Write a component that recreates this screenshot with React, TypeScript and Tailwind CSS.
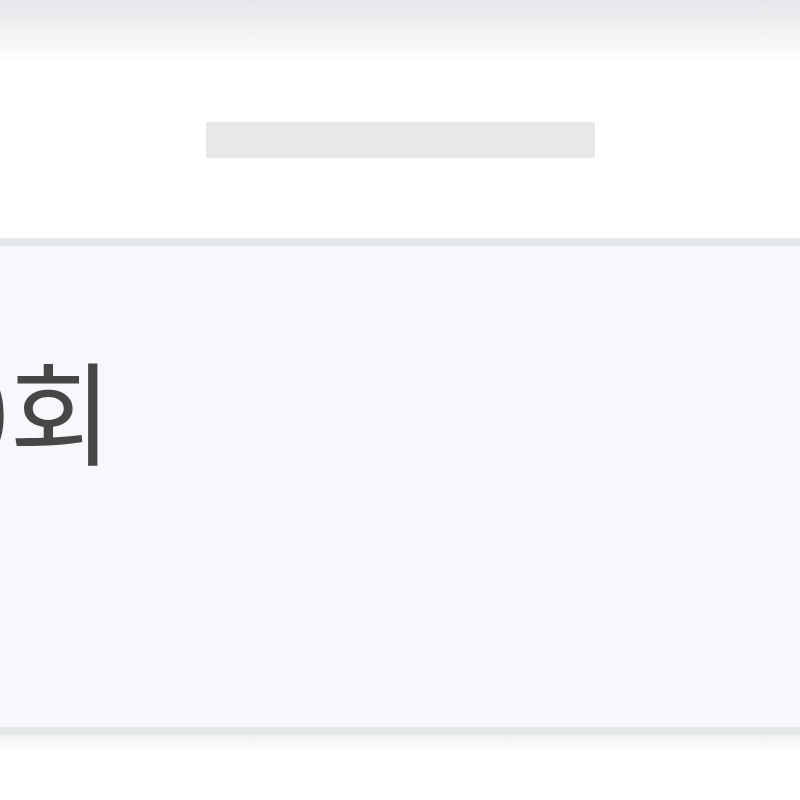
import React from 'react';

// Zoomed-in crop of a stats sheet: header with a skeleton bar, then a tinted panel holding a big count.
export default function App() {
  return (
    <div className="w-[800px] h-[800px] overflow-hidden bg-white flex flex-col font-['Noto_Sans_CJK_KR','Noto_Sans',sans-serif]">
      {/* Header */}
      <header className="relative h-[238px] shrink-0 bg-white flex justify-center">
        <div className="absolute inset-x-0 top-0 h-[64px] bg-gradient-to-b from-[#e7e5e9] to-white" />
        <div className="relative mt-[122px] w-[389px] h-[36px] bg-[#e6e8ea]" />
      </header>

      {/* Panel */}
      <section className="h-[497px] shrink-0 border-y-[8px] border-[#e5e8e9] bg-[#f8f8fc] overflow-hidden">
        <p className="mt-[106px] -ml-[53px] text-[112px] leading-none text-[#474747] whitespace-nowrap">0회</p>
      </section>

      <div className="h-[16px] bg-gradient-to-b from-[#f0f1f1] to-white" />
    </div>
  );
}
